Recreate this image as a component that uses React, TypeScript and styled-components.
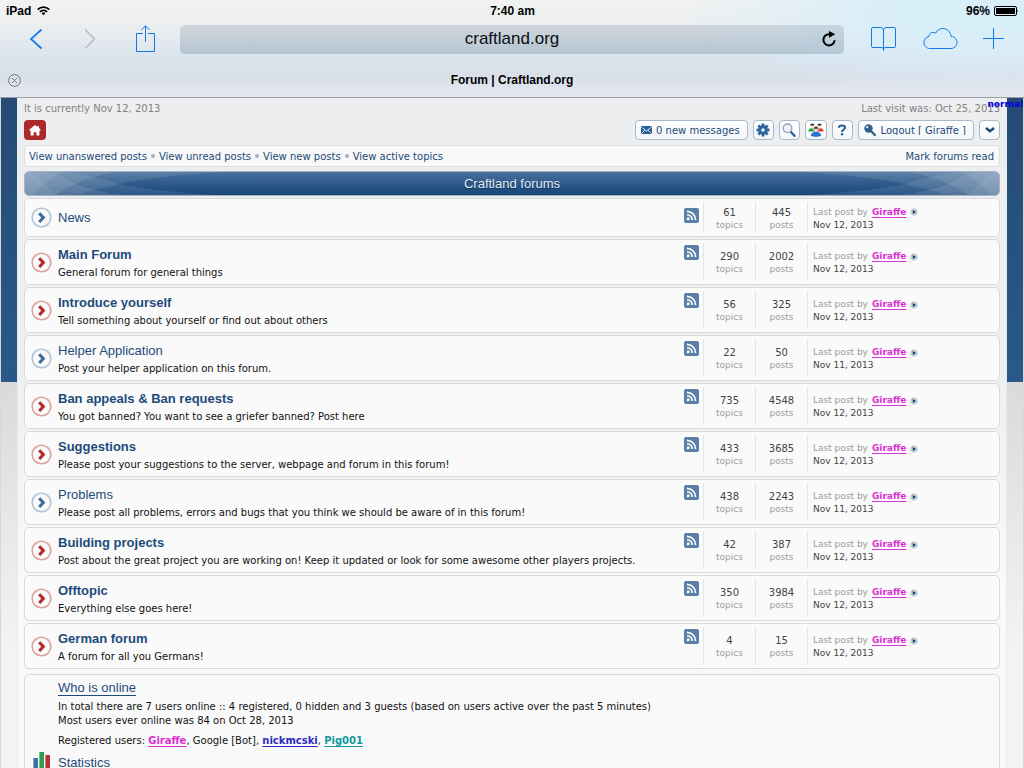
import React from "react";
import styled, { createGlobalStyle } from "styled-components";

const sans = `"Liberation Sans", Arial, sans-serif`;
const verdana = `"DejaVu Sans", Verdana, sans-serif`;
const navy = "#1d4b7b";

const GlobalStyle = createGlobalStyle`
  *, *::before, *::after { box-sizing: border-box; }
  body { margin: 0; background: #e3e3e5; font-family: ${verdana}; font-size: 10px; color: #111; overflow: hidden; }
  h1, h2, p, ul, dl, dd, dt { margin: 0; padding: 0; font-weight: normal; }
  ul { list-style: none; }
  a { color: inherit; text-decoration: none; }
  button { font: inherit; color: inherit; border: 0; padding: 0; background: none; cursor: pointer; }
  svg { display: block; flex: none; }
`;

const Browser = styled.div`
  display: flex;
  flex-direction: column;
  height: 100vh;
  overflow: hidden;
`;

/* ---------- Safari chrome ---------- */

const Chrome = styled.header`
  flex: none;
  border-bottom: 1px solid #9b9da3;
  background:
    radial-gradient(ellipse 300px 80px at 96% 12%, #d8eef9 30%, rgba(216, 238, 249, 0) 100%),
    linear-gradient(#f1f2f1 0, #edeff0 22px, #dae4ed 58px, #d9e0ea 74px, #e3e7ef 97px);
  font-family: ${sans};
  color: #000;
`;

const StatusBar = styled.div`
  display: grid;
  grid-template-columns: 1fr auto 1fr;
  align-items: center;
  height: 22px;
  padding: 0 5px 0 6px;
  font-size: 12px;
  font-weight: bold;
`;

const StatusSide = styled.div<{ $end?: boolean }>`
  display: flex;
  align-items: center;
  gap: ${(p) => (p.$end ? 4 : 6)}px;
  justify-content: ${(p) => (p.$end ? "flex-end" : "flex-start")};
`;

const Toolbar = styled.div`
  display: flex;
  align-items: center;
  height: 34px;
  padding: 0 19px 0 28px;
`;

const ToolGroup = styled.div<{ $gap: number; $before?: number; $after?: number }>`
  display: flex;
  align-items: center;
  gap: ${(p) => p.$gap}px;
  margin: 0 ${(p) => p.$after ?? 0}px 0 ${(p) => p.$before ?? 0}px;
`;

const ToolButton = styled.button<{ $muted?: boolean }>`
  justify-self: center;
  color: ${(p) => (p.$muted ? "#b9bec4" : "#1478e8")};
`;

const AddressBar = styled.div`
  display: grid;
  grid-template-columns: 30px 1fr 30px;
  align-items: center;
  flex: 1;
  height: 29px;
  border-radius: 5px;
  background: linear-gradient(rgba(115, 125, 145, 0.22), rgba(90, 125, 150, 0.3));
`;

const AddressInput = styled.input`
  grid-column: 2;
  width: 100%;
  border: 0;
  padding: 0;
  background: none;
  font: 17px ${sans};
  text-align: center;
  color: #0b0f14;
  outline: none;
`;

const TabBar = styled.div`
  display: grid;
  grid-template-columns: 13px 1fr 13px;
  align-items: center;
  height: 41px;
  padding: 7px 8px 0;
`;

const TabTitle = styled.h1`
  text-align: center;
  font-size: 12px;
  font-weight: bold;
  line-height: 16px;
`;

/* ---------- Forum page ---------- */

const Viewport = styled.div`
  position: relative;
  flex: 1;
  min-height: 0;
  overflow: hidden;
  border: solid #d5d9de;
  border-width: 0 1px;
  background:
    repeating-linear-gradient(rgba(0, 0, 30, 0.05) 0 1px, rgba(0, 0, 0, 0) 1px 3px) 0 0 / 100% 284px no-repeat,
    repeating-linear-gradient(90deg, rgba(0, 0, 30, 0.05) 0 1px, rgba(0, 0, 0, 0) 1px 4px) 0 0 / 100% 284px no-repeat,
    linear-gradient(#274d76, #2b5b8c) 0 0 / 100% 284px no-repeat,
    linear-gradient(#dadadb 284px, #f4f4f5 560px);
`;

const FontProbe = styled.span`
  position: absolute;
  top: 0;
  right: 0;
  font-size: 9px;
  line-height: 12px;
  font-weight: bold;
  color: #0000e0;
`;

const Sheet = styled.main`
  margin: 0 16px;
  padding: 4px 6px 0;
  min-height: 100%;
  border: solid #e6eaee;
  border-width: 0 1px;
  background: linear-gradient(#edeef0, #eeeff1 280px, #f9f9fa 480px);
`;

const Spread = styled.div`
  display: flex;
  justify-content: space-between;
  align-items: center;
`;

const Dates = styled(Spread)`
  line-height: 14px;
  color: #818181;
`;

const Actions = styled(Spread)`
  margin-top: 4px;
  height: 20px;
`;

const HomeLink = styled.a`
  display: grid;
  place-items: center;
  width: 22px;
  height: 20px;
  border-radius: 4px;
  background: #ad282b;
  color: #fff;
`;

const ButtonRow = styled.div`
  display: flex;
  gap: 5px;
`;

const Pill = styled.button<{ $wide?: boolean }>`
  display: flex;
  align-items: center;
  justify-content: center;
  gap: 4px;
  min-width: 21px;
  height: 20px;
  padding: 0 ${(p) => (p.$wide ? 7 : 2)}px 0 ${(p) => (p.$wide ? 5 : 2)}px;
  border: 1px solid #a9b9cc;
  border-radius: 4px;
  background: linear-gradient(#fff, #f3f5f7);
  color: ${navy};
`;

const ClippedLabel = styled.span`
  height: 10px;
  line-height: 12px;
  overflow: hidden;
`;

const LinkBar = styled(Spread)`
  margin-top: 5px;
  height: 22px;
  padding: 0 5px 0 4px;
  border: 1px solid #dcdee0;
  border-radius: 4px;
  background: #f8f8f9;
  color: ${navy};
`;

const Links = styled.nav`
  display: flex;
  align-items: center;
  gap: 4px;
`;

const Dot = styled.span`
  width: 4px;
  height: 4px;
  border-radius: 50%;
  background: #9fb2c6;
`;

const Banner = styled.div`
  position: relative;
  display: flex;
  align-items: center;
  justify-content: center;
  margin: 4px 0 2px;
  height: 25px;
  border: 1px solid #a5b4c5;
  border-radius: 5px;
  background: linear-gradient(#48709d, #164579);
  overflow: hidden;
`;

const BannerTitle = styled.h2`
  position: relative;
  font: 13px/17px ${sans};
  color: #e3edf7;
  text-shadow: 0 1px 1px #0d2c50;
`;

const BannerWave = styled.svg<{ $flip?: boolean }>`
  position: absolute;
  top: 0;
  ${(p) => (p.$flip ? "right: 0; transform: scaleX(-1);" : "left: 0;")}
`;

const ForumList = styled.ul`
  display: flex;
  flex-direction: column;
  gap: 2px;
`;

const ForumRow = styled.li<{ $short: boolean }>`
  display: grid;
  grid-template-columns: 33px 1fr 52px 52px 192px;
  align-items: center;
  height: ${(p) => (p.$short ? 39 : 46)}px;
  border: 1px solid #d8dadb;
  border-radius: 5px;
  background: #fafafa;
`;

const StateIcon = styled.div`
  padding-left: 6px;
`;

const ForumInfo = styled.div<{ $short: boolean }>`
  display: flex;
  justify-content: space-between;
  align-items: flex-start;
  padding: ${(p) => (p.$short ? 0 : 2)}px 4px 0 0;
`;

const ForumTitle = styled.a<{ $unread: boolean }>`
  display: block;
  font: ${(p) => (p.$unread ? "bold" : "normal")} 13px/19px ${sans};
  color: ${navy};
`;

const Description = styled.p`
  line-height: 18px;
  white-space: nowrap;
`;

const Cell = styled.div`
  display: flex;
  flex-direction: column;
  justify-content: center;
  height: calc(100% - 6px);
  padding-top: 2px;
  border-left: 1px solid #e3e4e5;
  line-height: 12px;
  color: #444;
`;

const Stat = styled(Cell)`
  align-items: center;
`;

const Caption = styled.span`
  font-size: 9px;
  color: #9c9c9c;
`;

const LastPost = styled(Cell)`
  padding-left: 5px;
  line-height: 13px;
  font-size: 9px;
`;

const PostLine = styled.div`
  display: flex;
  align-items: center;
  gap: 4px;
`;

const User = styled.a<{ $color: string }>`
  color: ${(p) => p.$color};
  font-weight: bold;
  text-decoration: underline;
  text-decoration-thickness: 1px;
  text-underline-offset: 2px;
`;

const Online = styled.section`
  margin-top: 5px;
  height: 130px;
  padding: 3px 0 0 33px;
  border: 1px solid #d8dadb;
  border-radius: 5px;
  background: #f9f9f9;
  line-height: 14px;
`;

const SectionTitle = styled.h2`
  font: 13px/19px ${sans};
  color: ${navy};
`;

const UnderlinedLink = styled.a`
  text-decoration: underline;
  text-decoration-thickness: 1px;
  text-underline-offset: 3px;
`;

const OnlineText = styled.p`
  margin-top: 3px;
`;

const Registered = styled.p`
  margin: 6px 0 3px;
`;

const StatsHead = styled.div`
  display: flex;
  align-items: center;
  gap: 7px;
  margin-left: -25px;
`;

/* ---------- Icons ---------- */

const WifiIcon = () => (
  <svg width="13" height="10" viewBox="0 0 13 10" fill="none" stroke="#000" strokeWidth="1.7">
    <path d="M.7 3.6C4 .3 9 .3 12.3 3.6M2.9 5.8c2-2 5.200-2 7.200 0" />
    <path d="M4.600 7.300a2.700 2.700 0 0 1 3.800 0L6.500 9.300z" fill="#000" stroke="none" />
  </svg>
);

const BatteryIcon = () => (
  <svg width="25" height="10" viewBox="0 0 25 10">
    <rect x=".5" y=".5" width="22" height="9" rx="1.500" fill="none" stroke="#000" />
    <rect x="2" y="2" width="19" height="6" fill="#000" />
    <path d="M23.500 3.200q1.300 1.800 0 3.600z" fill="#000" />
  </svg>
);

const Chevron = ({ flip }: { flip?: boolean }) => (
  <svg width="16" height="22" viewBox="0 0 16 22" fill="none" stroke="currentColor" strokeWidth="1.700">
    <path d={flip ? "M3 1.500 12.500 11 3 20.500" : "M13.500 1.500 3 11l10.500 9.500"} />
  </svg>
);

const ShareIcon = () => (
  <svg width="20" height="28" viewBox="0 0 20 28" fill="none" stroke="currentColor" strokeWidth="1">
    <path d="M7 8.500H.5v18h18v-18H12M9.500 17V.800M5.500 5l4-4.200L13.500 5" />
  </svg>
);

const ReloadIcon = () => (
  <svg width="16" height="17" viewBox="0 0 16 17" fill="none" stroke="#000" strokeWidth="2">
    <path d="M9.500 3.200H8a5.600 5.600 0 1 0 5.600 6" />
    <path d="M8 0l6.300 3.300L8 6.800z" fill="#000" stroke="none" />
  </svg>
);

const BookIcon = () => (
  <svg width="26" height="25" viewBox="0 0 26 25" fill="none" stroke="currentColor">
    <path d="M12.500 3Q12 .5 9.500 .5H2Q.5.5.5 2v17.500q0 1 1.500 1h8q2.500 0 2.500 1.500 0-1.500 2.500-1.500h8q1.500 0 1.500-1V2Q24.500.5 23 .5h-8Q13 .5 12.500 3V24" />
  </svg>
);

const CloudIcon = () => (
  <svg width="36" height="22" viewBox="0 0 36 22" fill="none" stroke="currentColor">
    <path d="M8 20.500c-3.500 0-6-2.700-6-6 0-3.200 2.100-5.600 5-6C7 5.800 9 4.300 11 4.300c1 0 1.900.300 2.700.900C15 2.300 17.700.5 20.700.5c4.500 0 7.800 3.400 8.300 7.800 3.500.400 6 2.900 6 6.100 0 3.400-2.600 6.100-6.200 6.100z" />
  </svg>
);

const PlusIcon = () => (
  <svg width="22" height="22" viewBox="0 0 22 22" stroke="currentColor">
    <path d="M10.500 0v21M0 10.500h21" />
  </svg>
);

const CloseIcon = () => (
  <svg width="13" height="13" viewBox="0 0 13 13" fill="none" stroke="#70757c">
    <circle cx="6.500" cy="6.500" r="5.900" />
    <path d="M4 4l5 5M9 4 4 9" />
  </svg>
);

const HomeIcon = () => (
  <svg width="12" height="11" viewBox="0 0 12 11" fill="currentColor">
    <path d="M6 0 .200 4.800l.8 1h.6v4.700h3V7.300h2.800v3.200h3V5.800h.6l.8-1L10 3.100V1H8.500v1.100z" />
  </svg>
);

const MailIcon = () => (
  <svg width="11" height="8" viewBox="0 0 11 8">
    <rect width="11" height="8" rx="1" fill="#2b5e94" />
    <path d="M.500 1 5.500 5l5-4M.500 7.500l3.500-3.500M10.500 7.500 7 4" stroke="#d3e3f4" fill="none" />
  </svg>
);

const GearIcon = () => (
  <svg width="14" height="14" viewBox="-7 -7 14 14">
    <g fill="#2b639c">
      {[0, 45, 90, 135].map((a) => (
        <rect key={a} x="-1.400" y="-6.500" width="2.800" height="13" transform={`rotate(${a})`} />
      ))}
      <circle r="4.700" />
    </g>
    <circle r="1.800" fill="#eef4fa" />
  </svg>
);

const SearchIcon = () => (
  <svg width="14" height="14" viewBox="0 0 14 14" fill="none">
    <path d="m8.500 8.500 4 4.300" stroke="#2f5f92" strokeWidth="2.300" strokeLinecap="round" />
    <circle cx="5.500" cy="5.300" r="4.300" fill="#edf3f9" stroke="#93a6ba" strokeWidth="1.300" />
  </svg>
);

const GroupIcon = () => (
  <svg width="16" height="14" viewBox="0 0 16 14">
    <circle cx="4.300" cy="2.600" r="1.900" fill="#f4dccb" />
    <circle cx="11.500" cy="2.600" r="1.900" fill="#f4dccb" />
    <path d="M2.200 2.600a2.100 2.100 0 0 1 4.200 0zM9.400 2.600a2.100 2.100 0 0 1 4.200 0z" fill="#333" />
    <path d="M.300 8.500C.300 4 6.500 4 7 8.500z" fill="#28a745" />
    <path d="M9 8.500C9 4 15.500 4 15.700 8.500z" fill="#e03c35" />
    <circle cx="8" cy="6.200" r="2.300" fill="#f4dccb" />
    <path d="M5.800 5.800a2.200 2.200 0 0 1 4.400 0z" fill="#333" />
    <path d="M2.800 12.500c.500-5 9.900-5 10.400 0-2 1.800-8.400 1.800-10.400 0z" fill="#2b74cc" />
  </svg>
);

const HelpIcon = () => (
  <svg width="10" height="12" viewBox="0 0 10 12">
    <path d="M2 3.700C2 .700 8 .700 8 3.700 8 5.500 5 5.500 5 8" fill="none" stroke="#285a91" strokeWidth="2" />
    <circle cx="5" cy="10.300" r="1.200" fill="#285a91" />
  </svg>
);

const KeyIcon = () => (
  <svg width="13" height="13" viewBox="0 0 13 13">
    <circle cx="4.500" cy="4.500" r="4.200" fill="#31618f" />
    <circle cx="3.200" cy="3.200" r="1.100" fill="#f0f4f8" />
    <path d="m6.500 6.500 5 5.300M8.700 10.300l1.500-1.500" stroke="#31618f" strokeWidth="2.400" />
  </svg>
);

const DownIcon = () => (
  <svg width="10" height="6" viewBox="0 0 10 6" fill="none" stroke="#174677" strokeWidth="2.400">
    <path d="m1 1 4 3.200L9 1" />
  </svg>
);

const ForumIcon = ({ unread }: { unread: boolean }) => (
  <svg width="21" height="21" viewBox="0 0 21 21" fill="none">
    <circle cx="10.500" cy="10.500" r="9.300" fill="#fbfbfb" stroke={unread ? "#dfa0a2" : "#b3c2d2"} strokeWidth="1.600" />
    <path d="m8.200 6.200 4.200 4.400-4.200 4.400" stroke={unread ? "#b0292c" : "#3f6b98"} strokeWidth="3" />
  </svg>
);

const RssIcon = () => (
  <svg width="15" height="15" viewBox="0 0 15 15" fill="none">
    <rect width="15" height="15" rx="2" fill="#5b80a8" />
    <circle cx="4.200" cy="10.800" r="1.500" fill="#fff" />
    <path d="M3 6.700a5.300 5.300 0 0 1 5.300 5.300M3 3.400A8.600 8.600 0 0 1 11.600 12" stroke="#fff" strokeWidth="1.600" />
  </svg>
);

const JumpIcon = () => (
  <svg width="8" height="8" viewBox="0 0 8 8">
    <circle cx="4" cy="4" r="3.700" fill="#c5d1de" />
    <path d="M2.800 1.800 6 4 2.800 6.200z" fill="#2a425c" />
  </svg>
);

const ChartIcon = () => (
  <svg width="18" height="22" viewBox="0 0 18 22">
    <path d="M0 7h5v15H0z" fill="#436f9f" />
    <path d="M6 1h5v21H6z" fill="#2ba05a" />
    <path d="M12 4h5v18h-5z" fill="#b83236" />
    <path d="M0 7h1v15H0zM6 1h1v21H6zM12 4h1v18h-1z" fill="#fff" opacity=".35" />
  </svg>
);

const Wave = ({ flip }: { flip?: boolean }) => (
  <BannerWave $flip={flip} width="220" height="24" viewBox="0 0 220 24" fill="#fff">
    <path d="M0 0H200Q130 4 94 12 130 20 210 24H0z" opacity=".1" />
    <path d="M0 0H90Q66 5 50 12 70 20 105 24H0z" opacity=".1" />
    <path d="M0 0H42Q72 5 94 12 70 17 50 24H0z" opacity=".09" />
    <path d="M0 0H24Q40 5 50 12 38 17 30 24H0z" opacity=".09" />
    <path d="M0 0H40Q26 5 20 12 26 20 34 24H0z" opacity=".08" />
    <path d="M0 0H4Q14 5 20 12 12 18 6 24H0z" opacity=".08" />
  </BannerWave>
);

/* ---------- Data ---------- */

type Forum = {
  title: string;
  text?: string;
  unread?: boolean;
  topics: number;
  posts: number;
  date: string;
};

const forums: Forum[] = [
  { title: "News", topics: 61, posts: 445, date: "Nov 12, 2013" },
  { title: "Main Forum", text: "General forum for general things", unread: true, topics: 290, posts: 2002, date: "Nov 12, 2013" },
  { title: "Introduce yourself", text: "Tell something about yourself or find out about others", unread: true, topics: 56, posts: 325, date: "Nov 12, 2013" },
  { title: "Helper Application", text: "Post your helper application on this forum.", topics: 22, posts: 50, date: "Nov 11, 2013" },
  { title: "Ban appeals & Ban requests", text: "You got banned? You want to see a griefer banned? Post here", unread: true, topics: 735, posts: 4548, date: "Nov 12, 2013" },
  { title: "Suggestions", text: "Please post your suggestions to the server, webpage and forum in this forum!", unread: true, topics: 433, posts: 3685, date: "Nov 12, 2013" },
  { title: "Problems", text: "Please post all problems, errors and bugs that you think we should be aware of in this forum!", topics: 438, posts: 2243, date: "Nov 11, 2013" },
  { title: "Building projects", text: "Post about the great project you are working on! Keep it updated or look for some awesome other players projects.", unread: true, topics: 42, posts: 387, date: "Nov 12, 2013" },
  { title: "Offtopic", text: "Everything else goes here!", unread: true, topics: 350, posts: 3984, date: "Nov 12, 2013" },
  { title: "German forum", text: "A forum for all you Germans!", unread: true, topics: 4, posts: 15, date: "Nov 12, 2013" },
];

const views = ["View unanswered posts", "View unread posts", "View new posts", "View active topics"];
const pink = "#dc2fd6";

export default function App() {
  return (
    <Browser>
      <GlobalStyle />
      <Chrome>
        <StatusBar>
          <StatusSide>iPad <WifiIcon /></StatusSide>
          <span>7:40 am</span>
          <StatusSide $end>96% <BatteryIcon /></StatusSide>
        </StatusBar>
        <Toolbar>
          <ToolGroup $gap={38} $after={24}>
            <ToolButton aria-label="Back"><Chevron /></ToolButton>
            <ToolButton $muted aria-label="Forward"><Chevron flip /></ToolButton>
            <ToolButton aria-label="Share"><ShareIcon /></ToolButton>
          </ToolGroup>
          <AddressBar>
            <AddressInput aria-label="Address" defaultValue="craftland.org" />
            <ToolButton aria-label="Reload"><ReloadIcon /></ToolButton>
          </AddressBar>
          <ToolGroup $gap={25} $before={27}>
            <ToolButton aria-label="Bookmarks"><BookIcon /></ToolButton>
            <ToolButton aria-label="iCloud tabs"><CloudIcon /></ToolButton>
            <ToolButton aria-label="New tab"><PlusIcon /></ToolButton>
          </ToolGroup>
        </Toolbar>
        <TabBar>
          <ToolButton aria-label="Close tab"><CloseIcon /></ToolButton>
          <TabTitle>Forum | Craftland.org</TabTitle>
        </TabBar>
      </Chrome>

      <Viewport>
        <Sheet>
          <Dates>
            <span>It is currently Nov 12, 2013</span>
            <span>Last visit was: Oct 25, 2013</span>
          </Dates>
          <Actions>
            <HomeLink href="#" aria-label="Home"><HomeIcon /></HomeLink>
            <ButtonRow>
              <Pill $wide><MailIcon /><span>0 new messages</span></Pill>
              <Pill aria-label="Settings"><GearIcon /></Pill>
              <Pill aria-label="Search"><SearchIcon /></Pill>
              <Pill aria-label="Members"><GroupIcon /></Pill>
              <Pill aria-label="Help"><HelpIcon /></Pill>
              <Pill $wide><KeyIcon /><ClippedLabel>Logout [ Giraffe ]</ClippedLabel></Pill>
              <Pill aria-label="More"><DownIcon /></Pill>
            </ButtonRow>
          </Actions>
          <LinkBar>
            <Links>
              {views.map((v, i) => (
                <React.Fragment key={v}>
                  {i > 0 && <Dot />}
                  <a href="#">{v}</a>
                </React.Fragment>
              ))}
            </Links>
            <a href="#">Mark forums read</a>
          </LinkBar>
          <Banner>
            <Wave />
            <Wave flip />
            <BannerTitle>Craftland forums</BannerTitle>
          </Banner>
          <ForumList>
            {forums.map((f) => (
              <ForumRow key={f.title} $short={!f.text}>
                <StateIcon><ForumIcon unread={!!f.unread} /></StateIcon>
                <ForumInfo $short={!f.text}>
                  <div>
                    <ForumTitle href="#" $unread={!!f.unread}>{f.title}</ForumTitle>
                    {f.text && <Description>{f.text}</Description>}
                  </div>
                  <a href="#" aria-label={`Feed: ${f.title}`}><RssIcon /></a>
                </ForumInfo>
                <Stat>{f.topics}<Caption>topics</Caption></Stat>
                <Stat>{f.posts}<Caption>posts</Caption></Stat>
                <LastPost>
                  <PostLine>
                    <Caption>Last post by</Caption>
                    <User href="#" $color={pink}>Giraffe</User>
                    <a href="#" aria-label="View the latest post"><JumpIcon /></a>
                  </PostLine>
                  {f.date}
                </LastPost>
              </ForumRow>
            ))}
          </ForumList>
          <Online>
            <SectionTitle><UnderlinedLink href="#">Who is online</UnderlinedLink></SectionTitle>
            <OnlineText>
              In total there are 7 users online :: 4 registered, 0 hidden and 3 guests (based on users active over the past 5 minutes)
              <br />
              Most users ever online was 84 on Oct 28, 2013
            </OnlineText>
            <Registered>
              Registered users: <User href="#" $color={pink}>Giraffe</User>, Google [Bot],{" "}
              <User href="#" $color="#2b2bc4">nickmcski</User>, <User href="#" $color="#129a9a">Pig001</User>
            </Registered>
            <StatsHead>
              <ChartIcon />
              <SectionTitle>Statistics</SectionTitle>
            </StatsHead>
          </Online>
        </Sheet>
        <FontProbe>normal</FontProbe>
      </Viewport>
    </Browser>
  );
}
